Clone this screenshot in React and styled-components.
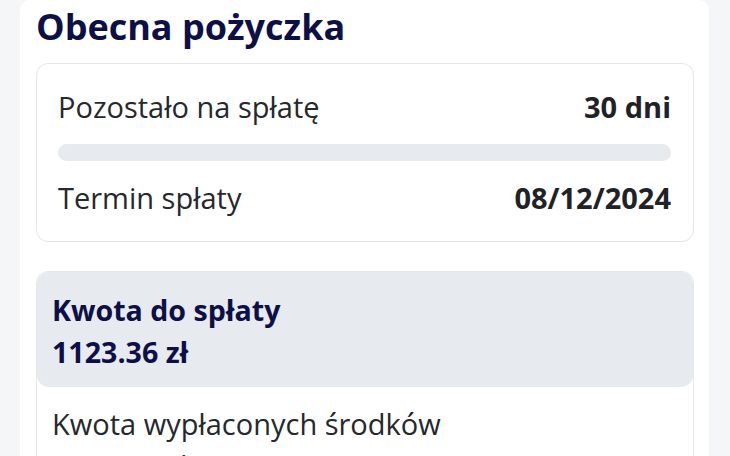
import React from "react";
import styled, { createGlobalStyle } from "styled-components";

const GlobalStyle = createGlobalStyle`
  html, body {
    margin: 0;
    padding: 0;
    background: #f5f6f8;
    font-family: "Open Sans", "Noto Sans", sans-serif;
  }
`;

const Page = styled.div`
  width: 730px;
  height: 456px;
  overflow: hidden;
  padding: 0 21px 0 20px;
  box-sizing: border-box;
`;

const Panel = styled.div`
  background: #ffffff;
  border-radius: 10px 10px 0 0;
  padding: 5px 15px 0 16px;
  height: 100%;
  box-sizing: border-box;
`;

const Title = styled.h1`
  margin: 0 0 14px;
  font-size: 36px;
  line-height: 44px;
  font-weight: 700;
  color: #0c1047;
`;

const Card = styled.div`
  border: 1px solid #e3e6ea;
  border-radius: 12px;
  padding: 23px 22px 23px 21px;
  display: flex;
  flex-direction: column;
  gap: 17px;
`;

const Row = styled.div`
  display: flex;
  justify-content: space-between;
  align-items: center;
  font-size: 29px;
  line-height: 40px;
  color: #25282d;
`;

const Value = styled.span`
  font-weight: 700;
  color: #1f2227;
`;

const Track = styled.div`
  height: 17px;
  border-radius: 9px;
  background: #e7eaee;
`;

const AmountCard = styled.div`
  margin-top: 29px;
  border: 1px solid #e3e6ea;
  border-radius: 12px;
`;

const AmountHeader = styled.div`
  background: #e7eaee;
  border-radius: 12px;
  padding: 17px 16px 14px 15px;
  color: #0c1047;
  font-weight: 700;
  font-size: 28.6px;
  line-height: 42px;
`;

const Detail = styled.div`
  padding: 16px 16px 0 15px;
  font-size: 29px;
  line-height: 42px;
  color: #25282d;
`;

export default function App() {
  return (
    <>
      <GlobalStyle />
      <Page>
        <Panel>
          <Title>Obecna pożyczka</Title>
          <Card>
            <Row>
              <span>Pozostało na spłatę</span>
              <Value>30 dni</Value>
            </Row>
            <Track />
            <Row>
              <span>Termin spłaty</span>
              <Value>08/12/2024</Value>
            </Row>
          </Card>
          <AmountCard>
            <AmountHeader>
              <div>Kwota do spłaty</div>
              <div>1123.36 zł</div>
            </AmountHeader>
            <Detail>
              <div>Kwota wypłaconych środków</div>
              <div>1000.00 zł</div>
            </Detail>
          </AmountCard>
        </Panel>
      </Page>
    </>
  );
}
